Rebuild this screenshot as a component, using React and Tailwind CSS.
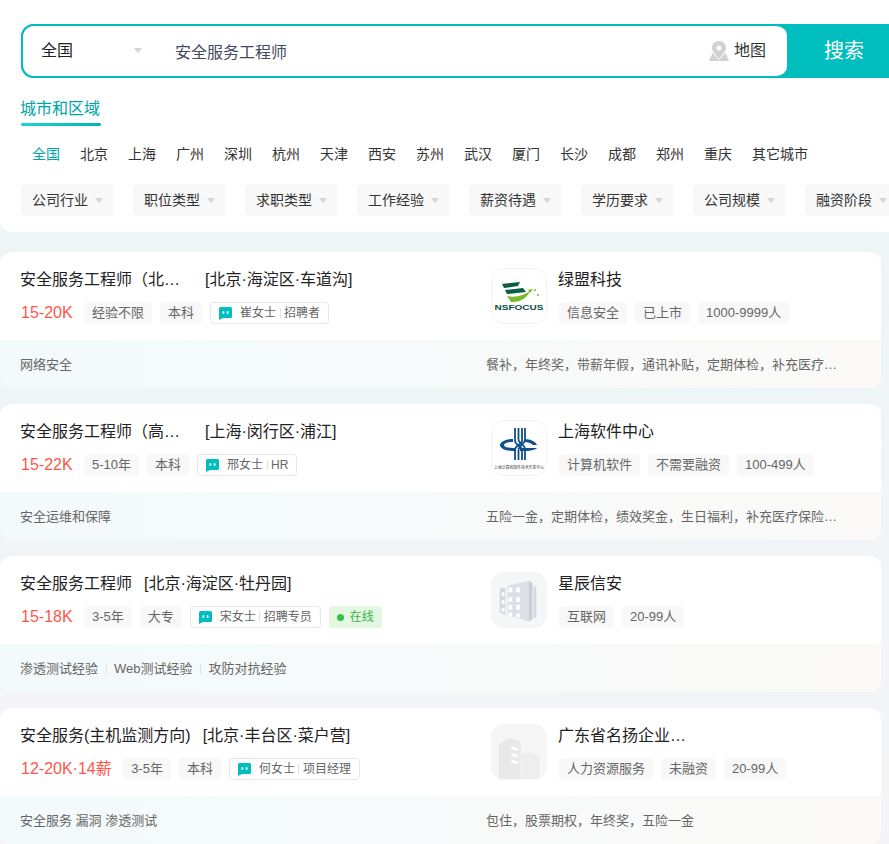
const cities = ["全国", "北京", "上海", "广州", "深圳", "杭州", "天津", "西安", "苏州", "武汉", "厦门", "长沙", "成都", "郑州", "重庆", "其它城市"];
const filters = ["公司行业", "职位类型", "求职类型", "工作经验", "薪资待遇", "学历要求", "公司规模", "融资阶段"];

const Caret = ({ className }) => (
  <span className={`inline-block w-0 h-0 border-x-4 border-x-transparent border-t-[5px] ${className}`} />
);

const ChatIcon = () => (
  <svg width="13" height="13" viewBox="0 0 13 13" className="shrink-0">
    <path d="M1.5 0H11.5A1.5 1.5 0 0 1 13 1.500V9.500A1.500 1.500 0 0 1 11.500 11H4L0 13V1.500A1.500 1.500 0 0 1 1.500 0Z" fill="#00bebd" />
    <rect x="3.500" y="4" width="1.800" height="3" rx="0.900" fill="#fff" />
    <rect x="7.700" y="4" width="1.800" height="3" rx="0.900" fill="#fff" />
  </svg>
);

const NsfocusLogo = () => (
  <svg width="54" height="54" viewBox="0 0 54 54">
    <path d="M10 15 L28 13 L26 17 L12 19 Z" fill="#0d5c45" />
    <path d="M13 21 L31 19 L34 23 L15 25 Z" fill="#0d5c45" />
    <path d="M15 27 C24 29 32 26 38 22 C36 28 28 34 19 33 Z" fill="#7ab929" />
    <path d="M36 21 L41 20 L38 24 Z" fill="#7ab929" />
    <circle cx="43" cy="21" r="1" fill="#7ab929" />
    <circle cx="46" cy="26" r="1" fill="#7ab929" />
    <text x="27" y="41" textAnchor="middle" fontSize="8" fontWeight="700" fill="#0d4f48" textLength="49" lengthAdjust="spacingAndGlyphs" fontFamily="Liberation Sans">NSFOCUS</text>
  </svg>
);

const SscLogo = () => (
  <svg width="54" height="54" viewBox="0 0 54 54">
    <path d="M21 18 C13 18 8 21 8 24 C8 27 13 30 21 30 H24 V27 H21 C16 27 12 26 12 24 C12 22 16 21 21 21 Z" fill="#0f4f8c" />
    <path d="M32 18 C39 18 44 21 45 24 H41 C39 22 36 21 32 21 Z" fill="#0f4f8c" />
    <path d="M28 27 H45 C44 28 40 30 33 30 H28 Z" fill="#0f4f8c" />
    <g fill="none" stroke="#0f4f8c" strokeWidth="1.800">
      <path d="M23 7 V20 C23 24 30 25 30 29 V39" />
      <path d="M26.500 7 V19 C26.500 22 33 24 33 28 V39" />
      <path d="M30 7 V20 C30 23 23 25 23 29 V39" />
      <path d="M33 7 V19 C33 22 26.500 25 26.500 29 V39" />
    </g>
    <text x="27" y="48" textAnchor="middle" fontSize="4" fill="#333" textLength="50" lengthAdjust="spacingAndGlyphs" fontFamily="Noto Sans CJK SC">上海计算机软件技术开发中心</text>
  </svg>
);

const TowerLogo = () => (
  <svg width="56" height="56" viewBox="0 0 56 56">
    <path d="M8 16 L14 15 V44 L8 41 Z" fill="#d5d8e0" />
    <path d="M16 13 L38 8 V50 L16 44 Z" fill="#dcdfe6" />
    <path d="M38 8 L42 10 V48 L38 50 Z" fill="#c9cdd7" />
    <path d="M43 13 L46 15 V46 L43 47 Z" fill="#d5d8e0" />
    <g fill="#fff">
      <rect x="17" y="15" width="4" height="5" />
      <rect x="25" y="15" width="4" height="5" />
      <rect x="10" y="20" width="3" height="4" />
      <rect x="17" y="25" width="4" height="5" />
      <rect x="25" y="25" width="4" height="5" />
      <rect x="10" y="28" width="3" height="4" />
      <rect x="17" y="33" width="4" height="5" />
      <rect x="25" y="33" width="4" height="5" />
      <rect x="10" y="36" width="3" height="4" />
      <rect x="17" y="41" width="4" height="4" />
      <rect x="25" y="42" width="4" height="4" />
    </g>
  </svg>
);

const GrayBuildingLogo = () => (
  <svg width="56" height="56" viewBox="0 0 56 56">
    <path d="M7 20 L18 13 L30 17 V56 H7 Z" fill="#e9e9e9" />
    <path d="M31 30 L37 28 L49 31 V56 H31 Z" fill="#eeeeee" />
    <g fill="#fff">
      <path d="M20 22 L27 24 V27 L20 25 Z" />
      <path d="M20 29 L27 31 V34 L20 32 Z" />
      <path d="M20 36 L27 38 V41 L20 39 Z" />
    </g>
  </svg>
);

const jobs = [
  {
    title: "安全服务工程师（北京）",
    clip: true,
    area: "[北京·海淀区·车道沟]",
    salary: "15-20K",
    tags: ["经验不限", "本科"],
    boss: "崔女士",
    role: "招聘者",
    company: "绿盟科技",
    logo: <NsfocusLogo />,
    logoBg: "bg-white border-[#f3f3f3]",
    companyTags: ["信息安全", "已上市", "1000-9999人"],
    skills: ["网络安全"],
    welfare: "餐补，年终奖，带薪年假，通讯补贴，定期体检，补充医疗保险，员工旅游",
  },
  {
    title: "安全服务工程师（高级）",
    clip: true,
    area: "[上海·闵行区·浦江]",
    salary: "15-22K",
    tags: ["5-10年", "本科"],
    boss: "邢女士",
    role: "HR",
    company: "上海软件中心",
    logo: <SscLogo />,
    logoBg: "bg-white border-[#f3f3f3]",
    companyTags: ["计算机软件", "不需要融资", "100-499人"],
    skills: ["安全运维和保障"],
    welfare: "五险一金，定期体检，绩效奖金，生日福利，补充医疗保险，带薪年假，节日福利",
  },
  {
    title: "安全服务工程师",
    area: "[北京·海淀区·牡丹园]",
    salary: "15-18K",
    tags: ["3-5年", "大专"],
    boss: "宋女士",
    role: "招聘专员",
    online: true,
    company: "星辰信安",
    logo: <TowerLogo />,
    logoBg: "bg-[#f5f6f8] border-[#f5f6f8]",
    companyTags: ["互联网", "20-99人"],
    skills: ["渗透测试经验", "Web测试经验", "攻防对抗经验"],
    divided: true,
    welfare: "",
  },
  {
    title: "安全服务(主机监测方向)",
    area: "[北京·丰台区·菜户营]",
    salary: "12-20K·14薪",
    tags: ["3-5年", "本科"],
    boss: "何女士",
    role: "项目经理",
    company: "广东省名扬企业管理咨询有限公司",
    logo: <GrayBuildingLogo />,
    logoBg: "bg-[#f6f6f6] border-[#f6f6f6]",
    companyTags: ["人力资源服务", "未融资", "20-99人"],
    skills: ["安全服务 漏洞 渗透测试"],
    welfare: "包住，股票期权，年终奖，五险一金",
  },
];

const Tag = ({ children }) => (
  <span className="h-[22px] px-2 rounded bg-[#f8f8f8] text-[13px] leading-[22px] text-[#666] whitespace-nowrap">{children}</span>
);

const JobCard = ({ job }) => (
  <div className="w-[881px] h-[136px] rounded-xl bg-white overflow-hidden shrink-0">
    <div className="h-[88px] flex">
      <div className="w-[491px] pl-[21px] pt-[17px] shrink-0">
        <div className="flex h-[22px] -ml-px text-base leading-[22px] text-[#222] whitespace-nowrap">
          <span className={job.clip ? "w-[165px] truncate mr-5" : "mr-3"}>{job.title}</span>
          <span>{job.area}</span>
        </div>
        <div className="flex items-center gap-2 mt-[11px]">
          <span className="text-base leading-[22px] text-[#fe574a] mr-[3.4px] whitespace-nowrap">{job.salary}</span>
          {job.tags.map((t) => (
            <Tag key={t}>{t}</Tag>
          ))}
          <span className="h-[22px] px-2 flex items-center rounded border border-[#e5e6e8] text-xs text-[#666] whitespace-nowrap">
            <ChatIcon />
            <span className="ml-2">{job.boss}</span>
            <span className="w-px h-2.5 bg-[#e0e0e0] mx-[3.5px]" />
            <span>{job.role}</span>
          </span>
          {job.online && (
            <span className="h-[22px] px-2 flex items-center gap-1.5 rounded bg-[#e4f7e0] text-xs text-[#3cb34a] whitespace-nowrap">
              <span className="w-[7px] h-[7px] rounded-full bg-[#38c14a]" />
              在线
            </span>
          )}
        </div>
      </div>
      <div className="flex pt-4 min-w-0">
        <div className={`w-14 h-14 rounded-xl border flex items-center justify-center overflow-hidden shrink-0 ${job.logoBg}`}>
          {job.logo}
        </div>
        <div className="ml-3 pt-px">
          <div className="h-[22px] -ml-px w-[142px] truncate text-base leading-[22px] text-[#222]">{job.company}</div>
          <div className="flex gap-2 mt-[11px]">
            {job.companyTags.map((t) => (
              <Tag key={t}>{t}</Tag>
            ))}
          </div>
        </div>
      </div>
    </div>
    <div className="h-12 pt-px flex items-center bg-linear-to-r from-[#f3fafb] to-[#fbfaf8] text-[13px] text-[#666]">
      <div className="w-[486px] pl-5 shrink-0 flex items-center whitespace-nowrap">
        {job.skills.map((s, i) => (
          <span key={s} className="flex items-center">
            {job.divided && i > 0 && <span className="w-px h-2.5 bg-[#e0e0e0] mx-[7.5px]" />}
            {s}
          </span>
        ))}
      </div>
      <div className="w-[352px] truncate">{job.welfare}</div>
    </div>
  </div>
);

export default function App() {
  return (
    <div
      className="w-[889px] h-[844px] overflow-hidden flex flex-col bg-linear-to-b from-[#eaf6f8] to-[#f5f4f7] text-[#222]"
      style={{ fontFamily: '"Liberation Sans", "Noto Sans CJK SC", sans-serif' }}
    >
      <div className="h-[232px] shrink-0 bg-white rounded-bl-xl pt-6 pl-[21px] overflow-hidden">
        <div className="w-[868px] h-[54px] flex bg-[#00bebd] rounded-l-[13px]">
          <div className="w-[766px] border-2 border-r-0 border-[#00bebd] bg-white rounded-l-[13px] rounded-r-[11px] flex items-center">
            <div className="w-[152px] pl-[18px] flex items-center text-base text-[#222] -mt-px">
              全国
              <Caret className="ml-[61px] border-t-[#d5d5d5]" />
            </div>
            <div className="mt-[3px] text-base text-[#414a60]">安全服务工程师</div>
            <div className="ml-auto mr-[21px] flex items-center gap-[5px] text-base text-[#333] -mt-px">
              <svg width="20" height="20" viewBox="0 0 20 20">
                <path d="M10 0C5.800 0 3 3.200 3 7C3 10.500 6.500 13.500 10 18C13.500 13.500 17 10.500 17 7C17 3.200 14.200 0 10 0ZM10 9.500A2.500 2.500 0 1 1 10 4.500A2.500 2.500 0 0 1 10 9.500Z" fill="#d2d2d2" />
                <path d="M3.500 12L0 20H20L16.500 12L10 19Z" fill="#d2d2d2" />
              </svg>
              地图
            </div>
          </div>
          <div className="flex-1 pl-[37px] flex items-center text-xl text-white">搜索</div>
        </div>
        <div className="mt-5 w-20 -ml-px text-base leading-[22px] text-[#00a6a7]">城市和区域</div>
        <div className="mt-[3px] w-20 h-[3px] rounded-sm bg-linear-to-r from-[#19d4d3] to-[#00b5b4]" />
        <div className="flex gap-5 pl-[11px] mt-[18px] h-5 text-sm leading-5 text-[#333]">
          {cities.map((c, i) => (
            <span key={c} className={i === 0 ? "text-[#00a6a7]" : ""}>
              {c}
            </span>
          ))}
        </div>
        <div className="flex gap-5 mt-5">
          {filters.map((f) => (
            <div key={f} className="w-[92px] h-8 shrink-0 rounded bg-[#f8f8f8] pl-[11px] flex items-center text-sm text-[#333]">
              {f}
              <Caret className="ml-[7px] border-t-[#d5d5d5]" />
            </div>
          ))}
        </div>
      </div>
      <div className="flex flex-col gap-4 pt-5">
        {jobs.map((job) => (
          <JobCard key={job.company} job={job} />
        ))}
      </div>
    </div>
  );
}
